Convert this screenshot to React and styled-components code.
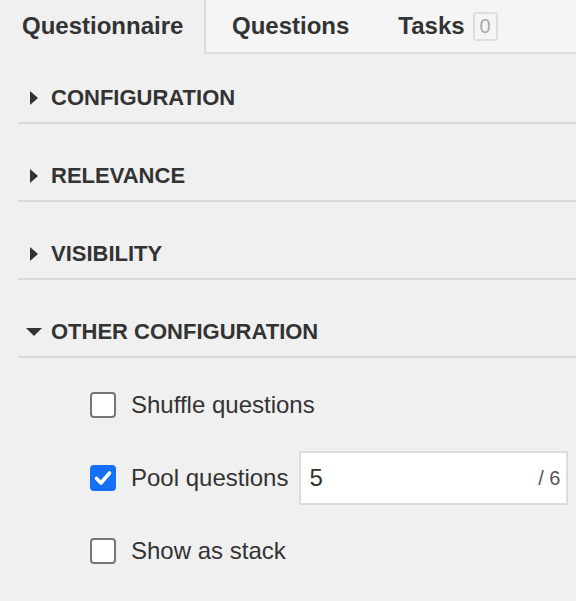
import React from "react"
import styled, { createGlobalStyle } from "styled-components"

const GlobalStyle = createGlobalStyle`
  *, *::before, *::after {
    box-sizing: border-box;
  }
  body {
    margin: 0;
    background: #f0f0f0;
    color: #333;
    font-family: "Liberation Sans", Arial, sans-serif;
  }
`

const Page = styled.div`
  width: 576px;
  min-height: 601px;
  background: #f0f0f0;
`

const TabBar = styled.div`
  display: flex;
  height: 54px;
`

const ActiveTab = styled.div`
  width: 204px;
  display: flex;
  align-items: center;
  padding: 0 0 2px 22px;
  font-size: 24px;
  font-weight: bold;
  color: #333;
`

const TabStrip = styled.div`
  flex: 1;
  display: flex;
  align-items: center;
  gap: 49px;
  padding-left: 26px;
  background: #f5f5f5;
  border-left: 2px solid #dcdcdc;
  border-bottom: 2px solid #dcdcdc;
`

const Tab = styled.div`
  display: flex;
  align-items: center;
  gap: 8px;
  font-size: 24px;
  font-weight: bold;
  color: #333;
`

const Badge = styled.span`
  display: inline-flex;
  align-items: center;
  justify-content: center;
  width: 25px;
  height: 29px;
  border: 2px solid #dedede;
  border-radius: 3px;
  font-size: 20px;
  font-weight: normal;
  color: #aaa;
`

const Sections = styled.div`
  margin-left: 18px;
`

const SectionHeader = styled.div`
  display: flex;
  align-items: center;
  height: 78px;
  padding-top: 28px;
  border-bottom: 2px solid #d9d9d9;
  font-size: 22px;
  font-weight: bold;
  text-transform: uppercase;
  color: #333;

  &:first-child {
    height: 70px;
    padding-top: 20px;
  }
`

const Caret = styled.span`
  width: 16px;
  margin: 0 9px 0 8px;
  display: flex;
  justify-content: center;

  &::before {
    content: "";
    display: block;
    ${(p) =>
      p.$open
        ? `border-top: 8px solid #333;
           border-left: 8px solid transparent;
           border-right: 8px solid transparent;`
        : `border-left: 8px solid #333;
           border-top: 7px solid transparent;
           border-bottom: 7px solid transparent;`}
  }
`

const Options = styled.div`
  display: flex;
  flex-direction: column;
  gap: 19px;
  padding: 20px 0 0 90px;
`

const Row = styled.label`
  display: flex;
  align-items: center;
  height: 54px;
  font-size: 24px;
  color: #333;
`

const Box = styled.span`
  width: 26px;
  height: 26px;
  flex-shrink: 0;
  display: flex;
  align-items: center;
  justify-content: center;
  border-radius: 4px;
  border: ${(p) => (p.$checked ? "none" : "2px solid #767676")};
  background: ${(p) => (p.$checked ? "#1670f5" : "#fff")};
`

const LabelText = styled.span`
  margin-left: 15px;
`

const Field = styled.div`
  margin-left: 11px;
  width: 269px;
  height: 54px;
  display: flex;
  align-items: center;
  padding: 0 6px 0 8px;
  background: #fff;
  border: 2px solid #dcdcdc;
`

const NumberInput = styled.input`
  flex: 1;
  min-width: 0;
  border: none;
  outline: none;
  background: transparent;
  padding: 0;
  font-family: inherit;
  font-size: 24px;
  color: #333;
`

const Suffix = styled.span`
  font-size: 20px;
  color: #555;
`

function Check({ checked }) {
  return (
    <Box $checked={checked}>
      {checked && (
        <svg width="26" height="26" viewBox="0 0 26 26">
          <path
            d="M6.5 13.5l4.5 4.5L19.5 8"
            fill="none"
            stroke="#fff"
            strokeWidth="3.6"
            strokeLinecap="round"
            strokeLinejoin="round"
          />
        </svg>
      )}
    </Box>
  )
}

const sections = [
  { title: "Configuration" },
  { title: "Relevance" },
  { title: "Visibility" },
  { title: "Other configuration", open: true },
]

export default function App() {
  return (
    <Page>
      <GlobalStyle />
      <TabBar>
        <ActiveTab>Questionnaire</ActiveTab>
        <TabStrip>
          <Tab>Questions</Tab>
          <Tab>
            Tasks <Badge>0</Badge>
          </Tab>
        </TabStrip>
      </TabBar>

      <Sections>
        {sections.map((s) => (
          <SectionHeader key={s.title}>
            <Caret $open={s.open} />
            {s.title}
          </SectionHeader>
        ))}
      </Sections>

      <Options>
        <Row>
          <Check />
          <LabelText>Shuffle questions</LabelText>
        </Row>
        <Row>
          <Check checked />
          <LabelText>Pool questions</LabelText>
          <Field>
            <NumberInput defaultValue="5" />
            <Suffix>/ 6</Suffix>
          </Field>
        </Row>
        <Row>
          <Check />
          <LabelText>Show as stack</LabelText>
        </Row>
      </Options>
    </Page>
  )
}
